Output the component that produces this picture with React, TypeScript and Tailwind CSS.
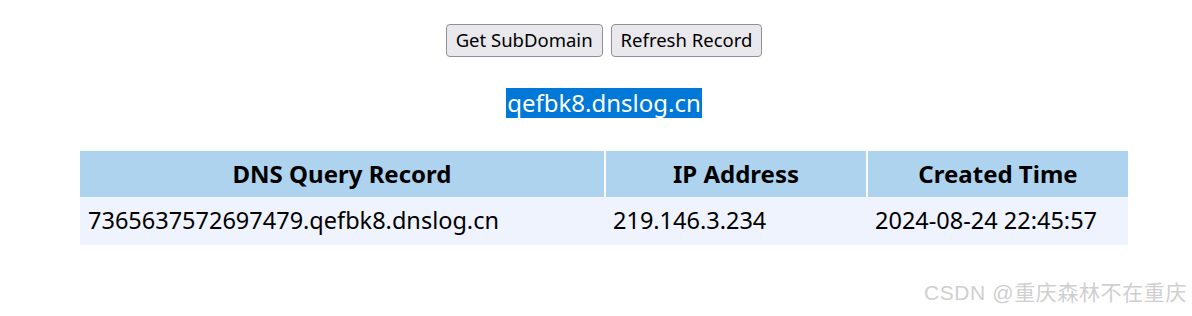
import React from 'react';

const rows = [
  { record: '7365637572697479.qefbk8.dnslog.cn', ip: '219.146.3.234', time: '2024-08-24 22:45:57' },
];

export default function App() {
  return (
    <div className="relative h-[316px] w-[1192px] bg-white font-['Noto_Sans',sans-serif] text-black">
      <div className="flex justify-center gap-2 pl-4 pt-6">
        <button className="h-[33px] rounded-[4px] border border-[#8f8f9d] bg-[#e9e9ed] px-[9px] text-[18.5px] leading-none">
          Get SubDomain
        </button>
        <button className="h-[33px] rounded-[4px] border border-[#8f8f9d] bg-[#e9e9ed] px-[9px] text-[18.5px] leading-none">
          Refresh Record
        </button>
      </div>

      <div className="mt-[31px] flex justify-center pl-4">
        <span className="bg-[#0078d7] px-px text-[24px] leading-[30px] text-white">qefbk8.dnslog.cn</span>
      </div>

      <div className="ml-[80px] mt-[33px] w-[1048px]">
        <table className="w-full table-fixed border-collapse">
          <thead>
            <tr className="bg-[#aed3ef] text-[24px]">
              <th className="h-[46px] w-[525px] border-r-2 border-white font-bold">DNS Query Record</th>
              <th className="h-[46px] w-[262px] border-r-2 border-white font-bold">IP Address</th>
              <th className="h-[46px] font-bold">Created Time</th>
            </tr>
          </thead>
          <tbody>
            {rows.map((r, i) => (
              <tr key={i} className="bg-[#eef3fe] text-[23.5px]">
                <td className="h-[48px] px-2 text-left">{r.record}</td>
                <td className="h-[48px] px-2 text-left">{r.ip}</td>
                <td className="h-[48px] px-2 text-left">{r.time}</td>
              </tr>
            ))}
          </tbody>
        </table>
      </div>

      <div className="absolute bottom-[8px] right-[5px] font-['Liberation_Sans','Noto_Sans_CJK_SC',sans-serif] text-[21px] tracking-[0.6px] text-[#cfcfcf]">
        CSDN @重庆森林不在重庆
      </div>
    </div>
  );
}
